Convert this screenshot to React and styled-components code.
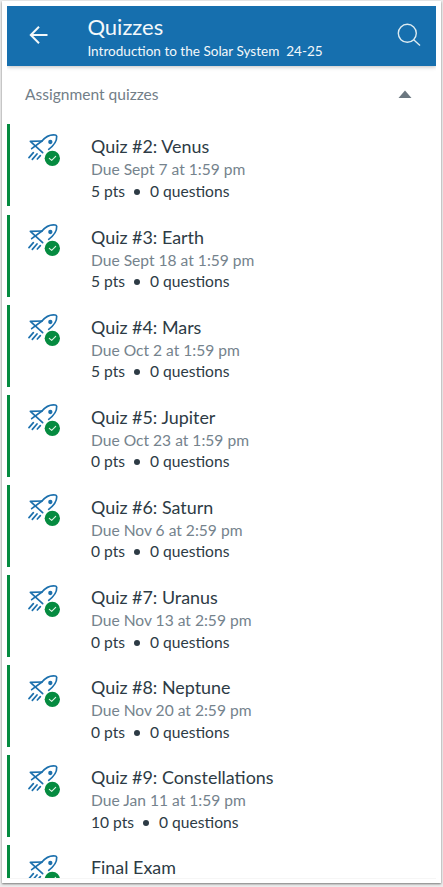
import React from "react";
import styled, { createGlobalStyle } from "styled-components";

const GlobalStyle = createGlobalStyle`
  * {
    box-sizing: border-box;
  }
  body {
    margin: 0;
    background: #ececec;
    font-family: Lato, "Open Sans", sans-serif;
    overflow: hidden;
  }
`;

const Page = styled.div`
  height: 887px;
  padding: 1px 2px 4px 2px;
`;

const Frame = styled.div`
  height: 882px;
  padding: 5px 5px 5px;
  background: #fff;
  box-shadow: 0 1px 2px 0 #777;
`;

const Screen = styled.div`
  height: 873px;
  overflow: hidden;
  background: #fff;
  border-bottom: 1px solid #f6f6f6;
`;

const Header = styled.header`
  display: flex;
  height: 60px;
  padding: 0 15px 0 21px;
  background: #166fae;
  color: #f3f8fa;
  box-shadow: 0 1px 4px rgba(0, 0, 0, 0.25);
`;

const BackIcon = styled.svg`
  width: 20px;
  height: 20px;
  margin-top: 19px;
`;

const Heading = styled.div`
  flex: 1;
  padding: 7px 0 0 39.4px;
`;

const Title = styled.h1`
  margin: 0;
  font-size: 22px;
  font-weight: 400;
  line-height: 27px;
`;

const Subtitle = styled.div`
  padding-top: 1px;
  font-size: 13.55px;
  line-height: 20px;
  white-space: pre;
`;

const SearchIcon = styled.svg`
  width: 24px;
  height: 24px;
  margin-top: 17px;
`;

const GroupHeader = styled.div`
  display: flex;
  align-items: center;
  justify-content: space-between;
  height: 58.4px;
  padding: 0 24px 3px 18px;
  color: #727e88;
  font-size: 15.55px;
`;

const Caret = styled.svg`
  width: 14px;
  height: 8px;
`;

const QuizRow = styled.div`
  display: flex;
  height: 82px;
  margin-bottom: 8.13px;
  padding-left: 18px;
  border-left: 3px solid #058b40;
`;

const RocketIcon = styled.svg`
  flex: none;
  width: 36px;
  height: 36px;
  margin-top: 7.6px;
`;

const QuizInfo = styled.div`
  padding: 10px 0 0 27px;
  color: #2d3b45;
`;

const QuizTitle = styled.div`
  font-size: 17.9px;
  line-height: 24px;
`;

const DueDate = styled.div`
  color: #75838d;
  font-size: 15.6px;
  line-height: 22px;
`;

const Details = styled.div`
  display: flex;
  align-items: center;
  padding-top: 0.5px;
  font-size: 15.6px;
  line-height: 21px;
`;

const Dot = styled.span`
  width: 6px;
  height: 6px;
  margin: 1px 10px 0 9px;
  border-radius: 50%;
  background: #2d3b45;
`;

const quizzes = [
  { title: "Quiz #2: Venus", due: "Due Sept 7 at 1:59 pm", points: 5 },
  { title: "Quiz #3: Earth", due: "Due Sept 18 at 1:59 pm", points: 5 },
  { title: "Quiz #4: Mars", due: "Due Oct 2 at 1:59 pm", points: 5 },
  { title: "Quiz #5: Jupiter", due: "Due Oct 23 at 1:59 pm", points: 0 },
  { title: "Quiz #6: Saturn", due: "Due Nov 6 at 2:59 pm", points: 0 },
  { title: "Quiz #7: Uranus", due: "Due Nov 13 at 2:59 pm", points: 0 },
  { title: "Quiz #8: Neptune", due: "Due Nov 20 at 2:59 pm", points: 0 },
  { title: "Quiz #9: Constellations", due: "Due Jan 11 at 1:59 pm", points: 10 },
  { title: "Final Exam" },
];

const Rocket = () => (
  <RocketIcon viewBox="0 0 108 108" fill="none" strokeLinecap="round" strokeLinejoin="round">
    <g stroke="#1c70ad" strokeWidth="5">
      <path d="M11 50L42 27C53 14 68 7 82 9Q86 10 86 14C87 30 78 40 62 52" />
      <path d="M42 27L7 28L44 62" />
      <path d="M16 62L3 77M27 66L13 82M37 71L28 81" />
    </g>
    <circle cx="67" cy="30" r="6.5" fill="#1c70ad" />
    <circle cx="73" cy="79" r="23" fill="#058b40" />
    <path d="M64 79L71 85L83 73" stroke="#e4f5e9" strokeWidth="3.2" />
  </RocketIcon>
);

const Quiz = ({ quiz }) => (
  <QuizRow>
    <Rocket />
    <QuizInfo>
      <QuizTitle>{quiz.title}</QuizTitle>
      {quiz.due && <DueDate>{quiz.due}</DueDate>}
      {quiz.due && (
        <Details>
          <span>{quiz.points} pts</span>
          <Dot />
          <span>0 questions</span>
        </Details>
      )}
    </QuizInfo>
  </QuizRow>
);

const App = () => {
  return (
    <>
      <GlobalStyle />
      <Page>
        <Frame>
          <Screen>
            <Header>
              <BackIcon viewBox="0 0 20 20" fill="none" stroke="#f3f8fa" strokeWidth="2">
                <path d="M19.5 10H3M11 1.8L2.8 10L11 18.2" />
              </BackIcon>
              <Heading>
                <Title>Quizzes</Title>
                <Subtitle>{"Introduction to the Solar System  24-25"}</Subtitle>
              </Heading>
              <SearchIcon viewBox="0 0 24 24" fill="none" stroke="#dcebf1" strokeWidth="1.4">
                <circle cx="10.3" cy="10.3" r="9" />
                <path d="M16.7 16.7L23 22.5" />
              </SearchIcon>
            </Header>
            <GroupHeader>
              Assignment quizzes
              <Caret viewBox="0 0 14 8">
                <path d="M0.5 8L7 0.5L13.5 8Z" fill="#6b7780" />
              </Caret>
            </GroupHeader>
            {quizzes.map((quiz) => (
              <Quiz key={quiz.title} quiz={quiz} />
            ))}
          </Screen>
        </Frame>
      </Page>
    </>
  );
};

export default App;
